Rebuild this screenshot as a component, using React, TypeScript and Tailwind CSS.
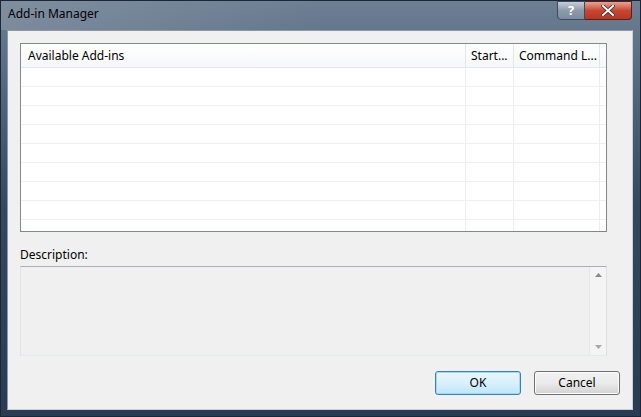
import React from "react";

const font = { fontFamily: '"Noto Sans", "Open Sans", sans-serif' };

export default function App() {
  const rows = Array.from({ length: 9 });
  return (
    <div
      className="relative w-[641px] h-[417px] overflow-hidden bg-gradient-to-b from-[#6d7f93] via-[#34475e] to-[#2a3c52] border border-[#1c2636] flex flex-col text-[12px] text-black"
      style={font}
    >
      {/* title bar */}
      <div className="h-[29px] flex items-start shrink-0 bg-gradient-to-r from-[#8b99a8]/60 via-transparent to-transparent">
        <div className="pl-[7px] pt-[4px] text-[12px] text-black">Add-in Manager</div>
        <div className="ml-auto mr-[8px] flex">
          <div className="w-[28px] h-[19px] rounded-bl-[4px] border border-[#3b4b5e] bg-gradient-to-b from-[#c6ced8] via-[#8d9aab] to-[#7b8ba0] flex items-center justify-center text-white font-bold text-[13px] leading-none">
            ?
          </div>
          <div className="w-[47px] h-[19px] rounded-br-[4px] border border-[#5a1f17] border-l-0 bg-gradient-to-b from-[#e5a497] via-[#c8452f] to-[#b9361f] flex items-center justify-center">
            <svg width="14" height="11" viewBox="0 0 14 11">
              <path d="M2 1 L12 10 M12 1 L2 10" stroke="#3a2a28" strokeWidth="3.6" strokeLinecap="square" />
              <path d="M2 1 L12 10 M12 1 L2 10" stroke="#ffffff" strokeWidth="2" strokeLinecap="square" />
            </svg>
          </div>
        </div>
      </div>
      {/* client */}
      <div className="ml-[6px] mr-[7px] mb-[6px] flex-1 border border-[#8c98a8] border-b-[#c9d0d9] border-r-[#c9d0d9] bg-[#f0f0f0] flex flex-col pl-[12px] pr-[11px] pt-[12px]">
        {/* list */}
        <div className="h-[189px] w-[587px] border border-[#828790] bg-white flex flex-col shrink-0">
          <div className="h-[24px] flex border-b border-[#e5e5e5] bg-gradient-to-b from-white to-[#f6f7f9] shrink-0">
            <div className="w-[445px] pl-[7px] flex items-center border-r border-[#e3e6ea]">Available Add-ins</div>
            <div className="w-[48px] pl-[5px] flex items-center border-r border-[#e3e6ea]">Start...</div>
            <div className="w-[86px] pl-[5px] flex items-center border-r border-[#e3e6ea]">Command L...</div>
            <div className="flex-1" />
          </div>
          <div className="flex-1 relative overflow-hidden">
            <div className="flex flex-col">
              {rows.map((_, i) => (
                <div key={i} className="h-[19px] flex border-b border-[#f0f0f0] shrink-0">
                  <div className="w-[445px] border-r border-[#eaeff7]" />
                  <div className="w-[48px] border-r border-[#eaeff7]" />
                  <div className="w-[86px] border-r border-[#eaeff7]" />
                  <div className="flex-1" />
                </div>
              ))}
            </div>
          </div>
        </div>
        <div className="mt-[15px] h-[16px] leading-[16px]">Description:</div>
        <div className="mt-[3px] h-[90px] w-[587px] border border-[#abadb3] border-b-[#e3e9ef] border-l-[#e2e3ea] border-r-[#dbdfe6] bg-[#f0f0f0] flex shrink-0">
          <div className="flex-1" />
          <div className="w-[17px] bg-[#f4f4f4] border-l border-[#e6e6e6] flex flex-col items-center justify-between py-[6px]">
            <svg width="7" height="4" viewBox="0 0 7 4">
              <path d="M0 4 L3.5 0 L7 4 Z" fill="#8a8a8a" />
            </svg>
            <svg width="7" height="4" viewBox="0 0 7 4">
              <path d="M0 0 L3.5 4 L7 0 Z" fill="#a8a8a8" />
            </svg>
          </div>
        </div>
        <div className="mt-[15px] flex justify-end gap-[13px] pr-[1px]">
          <button className="w-[86px] h-[24px] rounded-[3px] border border-[#3c7fb1] bg-gradient-to-b from-[#eaf6fd] via-[#d9f0fc] to-[#bee6fd] shadow-[inset_0_0_0_1px_#9edbfa] text-black text-[12px]">
            OK
          </button>
          <button className="w-[86px] h-[24px] rounded-[3px] border border-[#707070] bg-gradient-to-b from-[#f2f2f2] via-[#ebebeb] to-[#d2d2d2] shadow-[inset_0_0_0_1px_#fcfcfc] text-black text-[12px]">
            Cancel
          </button>
        </div>
      </div>
    </div>
  );
}
